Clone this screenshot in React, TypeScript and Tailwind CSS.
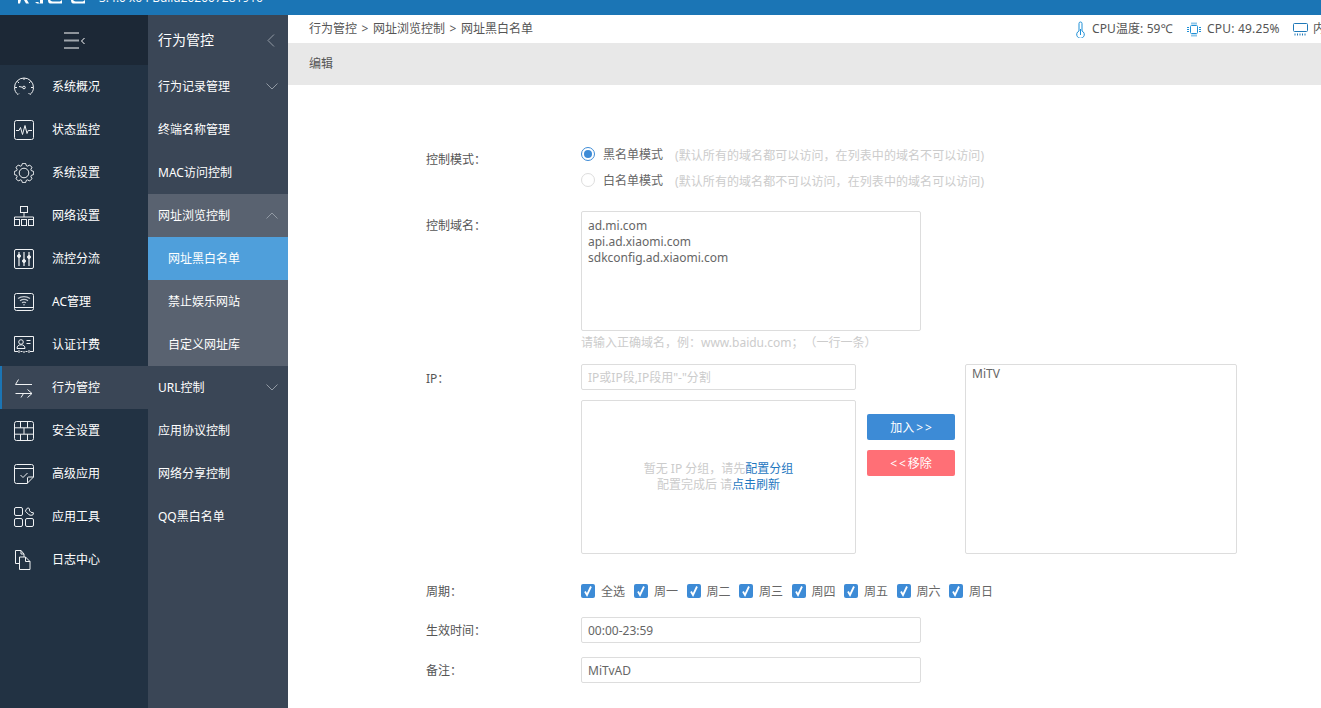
import React from "react";

const S = ({ children, w = 20, h = 20, vb = "0 0 20 20", c = "#f0f2f4" }: { children: React.ReactNode; w?: number; h?: number; vb?: string; c?: string }) => (
  <svg width={w} height={h} viewBox={vb} fill="none" stroke={c} strokeWidth={1} className="shrink-0">
    {children}
  </svg>
);

const gearPath = (() => {
  const pts: string[] = [];
  const n = 8;
  for (let i = 0; i < n; i++) {
    const a = (i / n) * Math.PI * 2;
    const step = (Math.PI * 2) / n;
    const list: [number, number][] = [
      [7.6, a - step * 0.42],
      [9.8, a - step * 0.2],
      [9.8, a + step * 0.2],
      [7.6, a + step * 0.42],
    ];
    for (const [r, t] of list) pts.push(`${(10 + r * Math.cos(t)).toFixed(2)} ${(10 + r * Math.sin(t)).toFixed(2)}`);
  }
  return "M" + pts.join("L") + "z";
})();

const icons: Record<string, React.ReactNode> = {
  gauge: (
    <S>
      <path d="M4 17.5C1.800 16 .5 13.400 .5 10.500a9.500 9.500 0 0 1 19 0c0 2.900-1.300 5.500-3.500 7" />
      <path d="M10 1v2M1 10.500h2M17 10.500h2M3.500 4.500 5 6M16.500 4.500 15 6M16 17.500l-1.500-1.500M4 17.500l1-1" />
      <circle cx="10" cy="10.500" r="1.300" />
      <path d="M8.700 10.300 5 9.500" />
    </S>
  ),
  monitor: (
    <S>
      <rect x=".5" y=".5" width="19" height="19" rx="2" />
      <path d="M2 10.500h3l1.500-3 2 7 2.500-9 2 8 1.200-3H18" />
    </S>
  ),
  gear: (
    <S>
      <path d={gearPath} />
      <circle cx="10" cy="10" r="4.800" />
    </S>
  ),
  network: (
    <S>
      <rect x="6.500" y=".5" width="7" height="6" />
      <path d="M10 6.500V11M.5 13.500V11h19v2.500" />
      <rect x=".5" y="13.500" width="5" height="6" />
      <rect x="7.500" y="13.500" width="5" height="6" />
      <rect x="14.500" y="13.500" width="5" height="6" />
    </S>
  ),
  sliders: (
    <S>
      <rect x=".5" y=".5" width="19" height="19" rx="1.500" />
      <path d="M5 3v14M10 3v14M15 3v14" strokeWidth="1.200" />
      <circle cx="5" cy="7" r="1.500" fill="#f0f2f4" />
      <circle cx="10" cy="12" r="1.500" fill="#f0f2f4" />
      <circle cx="15" cy="8" r="1.500" fill="#f0f2f4" />
    </S>
  ),
  wifi: (
    <S>
      <rect x=".5" y="1.500" width="19" height="17" rx="2" />
      <path d="M.5 15.500h19" />
      <path d="M4 6.500c3.500-2.500 8.500-2.500 12 0M6 8.700c2.500-1.700 5.500-1.700 8 0M8 10.800c1.300-.8 2.700-.8 4 0" stroke="#c4c9cf" strokeWidth="1.300" />
      <circle cx="10" cy="12.800" r=".8" fill="#c4c9cf" stroke="none" />
    </S>
  ),
  card: (
    <S>
      <path d="M4 16.500H.5v-15h19v15H16M6.500 16.500h2M11.500 16.500h2M5 15v3M15 15v3M10 16v2" />
      <circle cx="7" cy="7" r="2.300" />
      <path d="M3 13.500c0-2.500 1.500-3.700 4-3.700s4 1.200 4 3.700zM12.500 5.500h4M12.500 8.500h4" />
    </S>
  ),
  swap: (
    <S>
      <path d="M18 6.500H1.500L4.500 1.500" />
      <path d="M1.500 15.500H18L13.500 11.500M18 15.500l-4.500 4M9.500 15.500 7 19.500" />
    </S>
  ),
  wall: (
    <S>
      <rect x=".5" y=".5" width="19" height="19" rx="2" />
      <path d="M.5 6.800h19M.5 13.200h19M6.500 .5v6.300M13.500 .5v6.300M10 6.800v6.400M6.500 13.200v6.300M13.500 13.200v6.300" />
    </S>
  ),
  check: (
    <S>
      <path d="M13 19.500H2.500a2 2 0 0 1-2-2v-15a2 2 0 0 1 2-2h15a2 2 0 0 1 2 2V13zM.5 4.500h19" />
      <path d="M13.500 19.500V14a1 1 0 0 1 1-1h5" />
      <path d="M6.500 11l2.500 2.500 4.500-4.500" />
    </S>
  ),
  apps: (
    <S>
      <rect x=".5" y=".5" width="8" height="8" rx="1.500" />
      <rect x=".5" y="11.500" width="8" height="8" rx="1.500" />
      <rect x="11.500" y="11.500" width="8" height="8" rx="1.500" />
      <path d="M12 2.500 14 .8l1.500 1v2l1.500 1.500 2.500 .5-.5 2-2 .5-2-.5-3.500-3.500z" />
    </S>
  ),
  files: (
    <S>
      <path d="M1.500 .5H7L10 4v3M1.500 .5v13H5M7 .5V4h3" />
      <path d="M5.500 7h6l4.500 4.500v8H5.500zM11.500 7v4.500H16" />
    </S>
  ),
};

const left = [
  ["gauge", "系统概况"],
  ["monitor", "状态监控"],
  ["gear", "系统设置"],
  ["network", "网络设置"],
  ["sliders", "流控分流"],
  ["wifi", "AC管理"],
  ["card", "认证计费"],
  ["swap", "行为管控"],
  ["wall", "安全设置"],
  ["check", "高级应用"],
  ["apps", "应用工具"],
  ["files", "日志中心"],
];

const Chev = ({ d }: { d: "down" | "up" | "left" }) =>
  d === "left" ? (
    <svg width="8" height="13" viewBox="0 0 8 13" fill="none" stroke="#929aa4" strokeWidth="1">
      <path d="M7 .5 1 6.500l6 6" />
    </svg>
  ) : (
    <svg width="12" height="7" viewBox="0 0 12 7" fill="none" stroke="#929aa4" strokeWidth="1">
      <path d={d === "down" ? "M.5 .5 6 6l5.500-5.500" : "M.5 6.500 6 1l5.500 5.500"} />
    </svg>
  );

const Row2 = ({ text, bg = "", chev, sub }: { text: string; bg?: string; chev?: "down" | "up"; sub?: boolean }) => (
  <div className={`h-[43px] flex items-center justify-between pr-[10px] ${sub ? "pl-[20px]" : "pl-[10px]"} ${bg}`}>
    <span>{text}</span>
    {chev && <Chev d={chev} />}
  </div>
);

const Radio = ({ on, label, note }: { on?: boolean; label: string; note: string }) => (
  <div className="h-[26px] flex items-center">
    <span className={`w-[14px] h-[14px] rounded-full border flex items-center justify-center shrink-0 ${on ? "border-[#3d8bd6]" : "border-[#dddddd]"}`}>
      {on && <span className="w-[8px] h-[8px] rounded-full bg-[#3d8bd6]" />}
    </span>
    <span className="ml-[8px] text-[#666666] mt-[1px]">{label}</span>
    <span className="ml-[12px] text-[#cccccc] mt-[3px] tracking-[0.07px]">{note}</span>
  </div>
);

const Check = ({ label, wide }: { label: string; wide?: boolean }) => (
  <div className={`flex items-center shrink-0 ${wide ? "w-[53px]" : "w-[52.5px]"}`}>
    <span className="w-[14px] h-[14px] rounded-[2px] bg-[#3d8bd6] flex items-center justify-center shrink-0 -mt-[1px]">
      <svg width="12" height="12" viewBox="0 0 12 12" fill="none" stroke="#fff" strokeWidth="1.800">
        <path d="M3 6.500 5 10l4-8.500" />
      </svg>
    </span>
    <span className="ml-[6px] text-[#666666] mt-[2px]">{label}</span>
  </div>
);

const Label = ({ t, cls = "" }: { t: string; cls?: string }) => <div className={`w-[155px] shrink-0 text-[#555555] ${cls}`}>{t}</div>;

const inputCls = "block border border-[#dddddd] rounded-[2px] bg-white px-[6px] text-[12px] text-[#666666] outline-none placeholder:text-[#cccccc]";

export default function App() {
  return (
    <div className="w-[1321px] h-[708px] overflow-hidden flex flex-col bg-white text-[12px] font-['Noto_Sans','Noto_Sans_CJK_SC',sans-serif]">
      <header className="h-[15px] shrink-0 bg-[#1b75b5] flex items-end overflow-hidden text-white">
        <svg width="99" height="15" viewBox="0 0 99 15" fill="#fff" className="shrink-0">
          <path d="M18 0h3l-1 3.500h-2zM24 0h3l2 3.500h-3zM35 2h3l2 1.500h-3zM40 0h3v3.500h-3zM48 0h2c1 1 2 1.500 4 1.500h6l2-1.500v3.500H50c-1 0-2-1-2-3.500zM71 0h2c1 1 2 1.500 4 1.500h6l2-1.500v3.500H73c-1 0-2-1-2-3.500z" />
        </svg>
        <span className="text-[12px] leading-[14px] whitespace-nowrap mb-[10px] font-['Open_Sans',sans-serif]">3.4.0 x64 Build202007281916</span>
      </header>

      <div className="flex-1 flex min-h-0">
        <aside className="w-[148px] shrink-0 bg-[#223243] text-white">
          <div className="h-[50px] bg-[#1c2836] flex items-center justify-center">
            <svg width="21" height="17" viewBox="0 0 21 17" fill="none" strokeWidth="1">
              <path d="M0 1h15M0 16h15" stroke="#fff" />
              <path d="M0 8.500h15" stroke="#a0a6ad" strokeWidth="2" />
              <path d="M20.500 6l-3 3 3 3" stroke="#fff" />
            </svg>
          </div>
          {left.map(([ic, t]) => (
            <div key={t} className={`h-[43px] flex items-center gap-[18px] ${t === "行为管控" ? "bg-[#3a4656] border-l-2 border-[#1b75b5] pl-[12px]" : "pl-[14px]"}`}>
              {icons[ic]}
              <span>{t}</span>
            </div>
          ))}
        </aside>

        <nav className="w-[140px] shrink-0 bg-[#3a4656] text-white">
          <div className="h-[50px] flex items-center justify-between pl-[10px] pr-[13px]">
            <span className="text-[14px] -mt-[2px]">行为管控</span>
            <Chev d="left" />
          </div>
          <Row2 text="行为记录管理" chev="down" />
          <Row2 text="终端名称管理" />
          <Row2 text="MAC访问控制" />
          <Row2 text="网址浏览控制" chev="up" bg="bg-[#596270]" />
          <Row2 text="网址黑白名单" sub bg="bg-[#4f9fdb]" />
          <Row2 text="禁止娱乐网站" sub bg="bg-[#596270]" />
          <Row2 text="自定义网址库" sub bg="bg-[#596270]" />
          <Row2 text="URL控制" chev="down" />
          <Row2 text="应用协议控制" />
          <Row2 text="网络分享控制" />
          <Row2 text="QQ黑白名单" />
        </nav>

        <main className="flex-1 min-w-0 overflow-hidden">
          <div className="h-[28px] flex items-center pl-[21px] text-[#555555] whitespace-nowrap">
            <div className="w-[767px] shrink-0 flex">
              <span>行为管控</span>
              <span className="w-[16px] text-center">&gt;</span>
              <span>网址浏览控制</span>
              <span className="w-[16px] text-center">&gt;</span>
              <span>网址黑白名单</span>
            </div>
            <svg width="9" height="17" viewBox="0 0 9 17" fill="none" stroke="#1f8fd6" strokeWidth="1" className="shrink-0">
              <path d="M3 10V2.500a1.500 1.500 0 0 1 3 0V10a3.800 3.800 0 1 1-3 0z" />
              <path d="M4.500 8v6" />
            </svg>
            <span className="ml-[7px] w-[95px] shrink-0 tracking-[0.1px]">CPU温度: 59℃</span>
            <svg width="14" height="15" viewBox="0 0 14 15" fill="none" stroke="#1f8fd6" strokeWidth="1" className="shrink-0">
              <rect x="3.500" y="3.500" width="7" height="8" rx="1" />
              <path d="M5 .5v2M7 .5v2M9 .5v2M5 12.500v2M7 12.500v2M9 12.500v2M0 5.500h2M0 7.500h2M0 9.500h2M12 5.500h2M12 7.500h2M12 9.500h2" />
            </svg>
            <span className="ml-[6px] w-[86px] shrink-0 tracking-[0.2px]">CPU: 49.25%</span>
            <svg width="15" height="13" viewBox="0 0 15 13" fill="none" stroke="#1f78b8" strokeWidth="1" className="shrink-0">
              <rect x=".5" y=".5" width="14" height="8" rx="1" />
              <path d="M2 10.500v2M4.500 10.500v2M7 10.500v2M9.500 10.500v2M12 10.500v2" />
            </svg>
            <span className="ml-[5px] shrink-0">内存: 38%</span>
          </div>
          <div className="h-[42px] bg-[#e8e8e8] flex items-center pl-[21px] text-[#555555]">编辑</div>

          <form className="pl-[138px] pt-[56px]">
            <div className="flex">
              <Label t="控制模式：" cls="pt-[10px]" />
              <div>
                <Radio on label="黑名单模式" note="(默认所有的域名都可以访问，在列表中的域名不可以访问)" />
                <Radio label="白名单模式" note="(默认所有的域名都不可以访问，在列表中的域名可以访问)" />
              </div>
            </div>

            <div className="flex mt-[18px]">
              <Label t="控制域名：" cls="pt-[6px]" />
              <div>
                <textarea readOnly className={`${inputCls} w-[340px] h-[120px] py-[6px] leading-[16px] resize-none`} defaultValue={"ad.mi.com\napi.ad.xiaomi.com\nsdkconfig.ad.xiaomi.com"} />
                <div className="h-[22px] leading-[24px] text-[#cccccc]">请输入正确域名，例：www.baidu.com；<span className="ml-[7px]">（一行一条）</span></div>
              </div>
            </div>

            <div className="flex mt-[11px]">
              <Label t="IP：" cls="pt-[6px]" />
              <div className="w-[275px] shrink-0">
                <input readOnly placeholder={'IP或IP段,IP段用"-"分割'} className={`${inputCls} w-full h-[26px]`} />
                <div className="mt-[10px] h-[154px] border border-[#dddddd] rounded-[2px] flex flex-col items-center justify-center leading-[16px] text-[#cccccc]">
                  <div>暂无 IP 分组，请先<span className="text-[#1f78c1]">配置分组</span></div>
                  <div>配置完成后 请<span className="text-[#1f78c1]">点击刷新</span></div>
                </div>
              </div>
              <div className="w-[88px] ml-[11px] pt-[50px] shrink-0 text-white">
                <div className="h-[26px] bg-[#3d8bd6] rounded-[2px] flex items-center justify-center pt-[2px]">
                  <span>加入</span>
                  <span className="tracking-[2px] ml-[2px] -mr-[2px]">&gt;&gt;</span>
                </div>
                <div className="h-[26px] mt-[10px] bg-[#ff6f76] rounded-[2px] flex items-center justify-center pt-[2px]">
                  <span className="tracking-[2px]">&lt;&lt;</span>
                  <span>移除</span>
                </div>
              </div>
              <div className="ml-[10px] w-[272px] h-[190px] border border-[#dddddd] rounded-[2px] px-[6px] py-[1px] leading-[16px] text-[#666666]">MiTV</div>
            </div>

            <div className="flex items-center h-[22px] mt-[26px]">
              <Label t="周期：" cls="mt-[2px]" />
              <Check label="全选" wide />
              {["周一", "周二", "周三", "周四", "周五", "周六", "周日"].map((d) => (
                <Check key={d} label={d} />
              ))}
            </div>

            <div className="flex items-center mt-[15px]">
              <Label t="生效时间：" cls="mt-[2px]" />
              <input readOnly defaultValue="00:00-23:59" className={`${inputCls} w-[340px] h-[26px]`} />
            </div>
            <div className="flex items-center mt-[14px]">
              <Label t="备注：" cls="mt-[2px]" />
              <input readOnly defaultValue="MiTvAD" className={`${inputCls} w-[340px] h-[26px]`} />
            </div>
          </form>
        </main>
      </div>
    </div>
  );
}
